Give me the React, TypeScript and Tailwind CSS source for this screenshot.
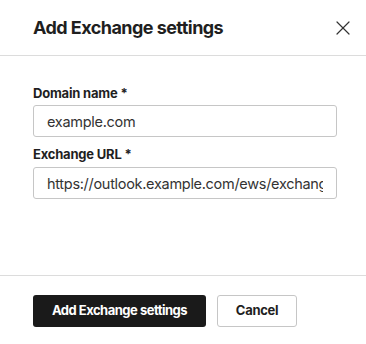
import { X } from 'lucide-react';

export default function App() {
  return (
    <div
      className="w-[366px] h-[344px] bg-white flex flex-col text-[#1f1f1f]"
      style={{ fontFamily: 'Inter, "Noto Sans", sans-serif' }}
    >
      {/* Header */}
      <div className="h-[56px] flex items-center justify-between pl-[33px] pr-[11px] border-b border-[#dcdcdc]">
        <h1 className="text-[18px] font-bold tracking-[-0.55px]">Add Exchange settings</h1>
        <X size={24} strokeWidth={1.2} className="text-[#333]" />
      </div>

      {/* Body */}
      <div className="flex-1 px-[33px] pt-[28px] border-b border-[#dcdcdc]">
        <label className="block text-[13px] font-bold leading-[18px] tracking-[-0.2px]">Domain name *</label>
        <input
          readOnly
          value="example.com"
          className="mt-[3px] w-[304px] h-[32px] border border-[#c6c6c6] rounded-[3px] px-[13px] text-[14.5px] text-[#333] tracking-[-0.3px] outline-none"
        />
        <label className="block mt-[8px] text-[13px] font-bold leading-[18px] tracking-[-0.2px]">Exchange URL *</label>
        <input
          readOnly
          value="https://outlook.example.com/ews/exchange.asmx"
          className="mt-[4px] w-[304px] h-[32px] border border-[#c6c6c6] rounded-[3px] px-[13px] text-[14.5px] text-[#333] tracking-[-0.3px] outline-none"
        />
      </div>

      {/* Footer */}
      <div className="h-[68px] flex items-center gap-[11px] px-[33px] pt-[2px]">
        <button className="h-[32px] w-[173px] bg-[#1a1a1a] text-white rounded-[3px] text-[13px] font-bold tracking-[-0.5px]">
          Add Exchange settings
        </button>
        <button className="h-[32px] w-[80px] border border-[#c6c6c6] bg-white rounded-[3px] text-[13px] font-bold tracking-[-0.3px]">
          Cancel
        </button>
      </div>
    </div>
  );
}
